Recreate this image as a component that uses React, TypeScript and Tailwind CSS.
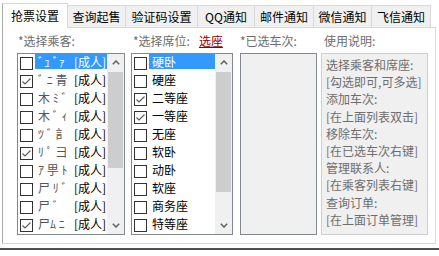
import React from 'react';

const FONT = { fontFamily: "'Noto Sans CJK SC', 'Liberation Sans', sans-serif" };

const tabs = [
  { label: '抢票设置', w: 'w-[66px]' },
  { label: '查询起售', w: 'w-[58px]' },
  { label: '验证码设置', w: 'w-[72px]' },
  { label: 'QQ通知', w: 'w-[57px]' },
  { label: '邮件通知', w: 'w-[59px]' },
  { label: '微信通知', w: 'w-[58px]' },
  { label: '飞信通知', w: 'w-[59px]' },
];

// names are blurred in the source, so only scraps of them show
const passengers = [
  { name: 'ﾞｭ ﾞｧ', checked: false, selected: true },
  { name: 'ﾞ ﾆ 青', checked: true },
  { name: '木 ﾐ ﾞ', checked: false },
  { name: '木 ﾞ ｨ', checked: false },
  { name: 'ﾂ ﾞ 訁', checked: false },
  { name: 'ﾘ ﾟ 彐', checked: true },
  { name: 'ｱ 甼 ﾄ', checked: false },
  { name: '尸 ﾘ ﾞ', checked: false },
  { name: '尸  ﾞ', checked: false },
  { name: '尸ﾑ ﾆ', checked: true },
];

const seats = [
  { name: '硬卧', checked: false, selected: true },
  { name: '硬座', checked: false },
  { name: '二等座', checked: true },
  { name: '一等座', checked: true },
  { name: '无座', checked: false },
  { name: '软卧', checked: false },
  { name: '动卧', checked: false },
  { name: '软座', checked: false },
  { name: '商务座', checked: false },
  { name: '特等座', checked: false },
];

const help = [
  '选择乘客和席座:',
  '[勾选即可,可多选]',
  '添加车次:',
  '[在上面列表双击]',
  '移除车次:',
  '[在已选车次右键]',
  '管理联系人:',
  '[在乘客列表右键]',
  '查询订单:',
  '[在上面订单管理]',
];

function Check({ checked }: { checked: boolean }) {
  return (
    <span className="mt-[3px] w-[13px] h-[13px] shrink-0 border border-[#333333] bg-white flex items-center justify-center">
      {checked && (
        <svg width="11" height="11" viewBox="0 0 11 11">
          <polyline points="1.5,5.5 4,8 9.5,2.5" fill="none" stroke="#5a5a5a" strokeWidth="1.1" />
        </svg>
      )}
    </span>
  );
}

function ScrollBar({ thumb }: { thumb: string }) {
  return (
    <div className="w-[17px] h-full bg-[#f0f0f0] flex flex-col shrink-0">
      <div className="h-[17px] flex items-center justify-center">
        <svg width="8" height="5" viewBox="0 0 8 5">
          <polyline points="0.8,4.2 4,1 7.2,4.2" fill="none" stroke="#606060" strokeWidth="1.5" />
        </svg>
      </div>
      <div className="flex-1 px-[1px]">
        <div className={`${thumb} bg-[#cdcdcd]`} />
      </div>
      <div className="h-[17px] flex items-center justify-center">
        <svg width="8" height="5" viewBox="0 0 8 5">
          <polyline points="0.8,0.8 4,4 7.2,0.8" fill="none" stroke="#606060" strokeWidth="1.5" />
        </svg>
      </div>
    </div>
  );
}

function ListRow({ checked, selected, children }: { checked: boolean; selected?: boolean; children: React.ReactNode }) {
  return (
    <div className="h-[18px] flex items-start pl-[2px]">
      <Check checked={checked} />
      <div
        className={`ml-[2px] flex-1 h-[15px] pl-[3px] flex items-center whitespace-nowrap text-[12px] leading-[15px] ${
          selected ? 'bg-[#3399ff] text-white' : 'text-black'
        }`}
      >
        {children}
      </div>
    </div>
  );
}

export default function App() {
  return (
    <div className="w-[439px] h-[256px] bg-white overflow-hidden flex flex-col" style={FONT}>
      <div className="h-[27px] flex items-end pl-[2px]">
        {tabs.map((t, i) => (
          <div
            key={t.label}
            className={`${t.w} flex items-center justify-center text-[12px] text-black border-t border-r border-[#d9d9d9] ${
              i === 0
                ? 'h-[25px] bg-white border-l border-l-[#a8a8a8] relative z-10 -mb-px'
                : 'h-[22px] bg-[#f0f0f0]'
            }`}
          >
            {t.label}
          </div>
        ))}
      </div>

      <div className="ml-[2px] w-[434px] h-[217px] border border-[#d9d9d9] border-l-[#a8a8a8] bg-white pt-[5px] pl-[14px] flex">
        {/* passengers */}
        <div className="w-[108px] flex flex-col">
          <div className="h-[16px] pl-[1px] text-[12px] leading-[16px] text-[#6d6d6d]">*选择乘客:</div>
          <div className="mt-[4px] h-[182px] border border-[#828790] bg-white flex">
            <div className="flex-1">
              {passengers.map((p, i) => (
                <ListRow key={i} checked={p.checked} selected={p.selected}>
                  <span className={`inline-block w-[36px] shrink-0 ${p.selected ? 'text-white' : 'text-[#555]'}`}>
                    {p.name}
                  </span>
                  <span>[成人]</span>
                </ListRow>
              ))}
            </div>
            <ScrollBar thumb="mt-[1px] h-[96px]" />
          </div>
        </div>

        {/* seats */}
        <div className="ml-[6px] w-[102px] flex flex-col">
          <div className="h-[16px] pl-[2px] text-[12px] leading-[16px] text-[#6d6d6d] whitespace-nowrap">
            *选择席位:<span className="ml-[9px] text-[#990000] underline">选座</span>
          </div>
          <div className="mt-[4px] h-[182px] border border-[#828790] bg-white flex">
            <div className="flex-1">
              {seats.map((s) => (
                <ListRow key={s.name} checked={s.checked} selected={s.selected}>
                  {s.name}
                </ListRow>
              ))}
            </div>
            <ScrollBar thumb="mt-[1px] h-[120px]" />
          </div>
        </div>

        {/* selected trains */}
        <div className="ml-[7px] w-[77px] flex flex-col">
          <div className="h-[16px] text-[12px] leading-[16px] text-[#6d6d6d] whitespace-nowrap">*已选车次:</div>
          <div className="mt-[4px] h-[182px] border border-[#828790] bg-[#f0f0f0]" />
        </div>

        {/* help */}
        <div className="ml-[4px] w-[107px] flex flex-col">
          <div className="h-[16px] pl-[3px] text-[12px] leading-[16px] text-[#6d6d6d]">使用说明:</div>
          <div className="mt-[4px] h-[182px] border border-[#cfcfcf] bg-[#f0f0f0] pt-[2px] pl-[4px]">
            {help.map((line) => (
              <div key={line} className="text-[12px] leading-[17.2px] text-[#6d6d6d] whitespace-nowrap">
                {line}
              </div>
            ))}
          </div>
        </div>
      </div>

      <div className="mt-[4px] h-[2px] bg-[#505050]" />
    </div>
  );
}
